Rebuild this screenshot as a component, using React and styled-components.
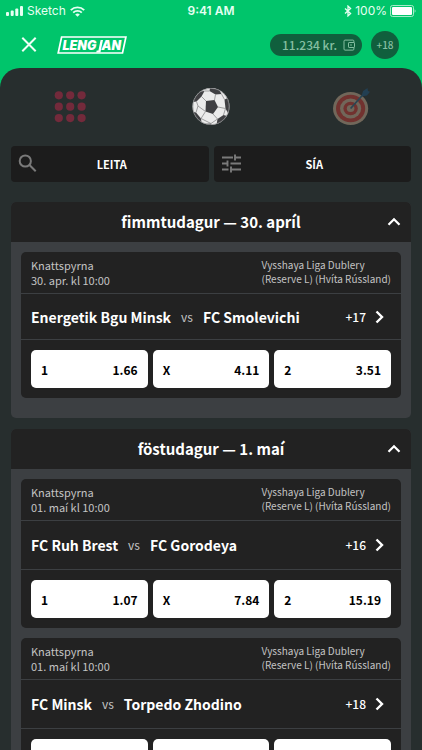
import React from 'react';
import styled, { createGlobalStyle } from 'styled-components';

const GlobalStyle = createGlobalStyle`
  * {
    box-sizing: border-box;
  }

  html {
    background-color: #272e2e;
  }

  body {
    margin: 0;
    background-color: #272e2e;
    overflow-x: hidden;
    scrollbar-width: none;
  }

  body, button {
    font-family: 'Noto Sans CJK JP', 'Noto Sans', sans-serif;
  }

  button {
    margin: 0;
    padding: 0;
    border: 0;
    background: none;
    color: inherit;
    cursor: pointer;
  }

  p, h2 {
    margin: 0;
  }
`;

const Page = styled.div`
  height: 100vh;
  overflow: hidden;
  background-color: #00c56b;
`;

const StatusBar = styled.div`
  display: grid;
  grid-template-columns: 1fr auto 1fr;
  align-items: center;
  height: 22px;
  padding: 0 6px;
  font-family: Inter, sans-serif;
  font-size: 12px;
  line-height: 22px;
  color: #e6fff2;
`;

const StatusGroup = styled.div`
  display: flex;
  align-items: center;
  gap: ${({ $gap }) => $gap}px;
  justify-content: ${({ $end }) => ($end ? 'flex-end' : 'flex-start')};
`;

const Clock = styled.span`
  font-weight: 600;
`;

const TopBar = styled.header`
  display: flex;
  align-items: center;
  height: 46px;
  padding: 0 23px 0 20px;
`;

const CloseButton = styled.button`
  display: flex;
  margin-right: 19px;
`;

const Balance = styled.button`
  display: flex;
  align-items: center;
  gap: 6px;
  height: 22px;
  margin-left: auto;
  padding: 0 7px 0 12px;
  border-radius: 11px;
  background-color: #105f3d;
  color: #86bfa2;
  font-size: 12px;
  font-weight: 500;
  line-height: 22px;
`;

const AgeBadge = styled.span`
  width: 28px;
  height: 28px;
  margin-left: 9px;
  border-radius: 50%;
  background-color: #105f3d;
  color: #86bfa2;
  font-size: 10px;
  font-weight: 500;
  line-height: 28px;
  text-align: center;
`;

const Sheet = styled.main`
  min-height: 100%;
  padding: 0 11px;
  border-radius: 20px 20px 0 0;
  background-color: #272e2e;
`;

const SportTabs = styled.nav`
  display: grid;
  grid-template-columns: repeat(3, 1fr);
  height: 78px;
  margin: 0 -11px;
`;

const SportTab = styled.button`
  display: flex;
  align-items: center;
  justify-content: center;
`;

const Tools = styled.div`
  display: grid;
  grid-template-columns: 1fr 1fr;
  gap: 5px;
  margin-bottom: 20px;
`;

const ToolButton = styled.button`
  display: grid;
  grid-template-columns: 24px 1fr 20px;
  align-items: center;
  height: 36px;
  padding: 0 6px;
  border-radius: 4px;
  background-color: #1c1c1c;
  color: #fff;
  font-size: 11px;
  font-weight: 700;
  line-height: 36px;
`;

const Day = styled.section`
  margin-bottom: 11px;
  border-radius: 5px;
  background-color: #3c3f42;
  overflow: hidden;
`;

const DayHeader = styled.button`
  display: grid;
  grid-template-columns: 24px 1fr 24px;
  align-items: center;
  width: 100%;
  height: 40px;
  padding: 0 5px;
  background-color: #222;
  color: #fff;
`;

const DayTitle = styled.h2`
  font-size: 15px;
  font-weight: 700;
  line-height: 40px;
  text-align: center;
`;

const DayBody = styled.div`
  display: flex;
  flex-direction: column;
  gap: 10px;
  padding: 10px 10px 20px;
`;

const Match = styled.article`
  border-radius: 5px;
  background-color: #222;
`;

const MatchInfo = styled.div`
  display: flex;
  justify-content: space-between;
  height: 42px;
  padding: 6px 10px 0;
  border-bottom: 1px solid #3c3f42;
  color: #c4c4c4;
`;

const Kickoff = styled.p`
  font-size: 11px;
  line-height: 15px;
`;

const League = styled.p`
  font-size: 10px;
  line-height: 14px;
`;

const Teams = styled.button`
  display: flex;
  align-items: center;
  width: 100%;
  height: ${({ $tall }) => ($tall ? 49 : 46)}px;
  padding: 0 11px 0 10px;
  border-bottom: 1px solid #3c3f42;
  color: #fff;
  font-size: 14px;
  font-weight: 700;
  line-height: 20px;
`;

const Versus = styled.span`
  margin: 0 10px;
  color: #c4c4c4;
  font-size: 12px;
  font-weight: 400;
`;

const MoreBets = styled.span`
  display: flex;
  align-items: center;
  gap: 2px;
  margin-left: auto;
  font-size: 12px;
  font-weight: 500;
`;

const Odds = styled.div`
  display: grid;
  grid-template-columns: repeat(3, 1fr);
  gap: 5px;
  padding: 10px;
`;

const Odd = styled.button`
  display: flex;
  align-items: center;
  justify-content: space-between;
  height: 38px;
  padding: 0 10px;
  border-radius: 5px;
  background-color: #fff;
  color: #000;
  font-size: 12px;
  font-weight: 700;
`;

const days = [
  {
    title: 'fimmtudagur — 30. apríl',
    matches: [
      { time: '30. apr. kl 10:00', home: 'Energetik Bgu Minsk', away: 'FC Smolevichi', more: 17, odds: ['1.66', '4.11', '3.51'] },
    ],
  },
  {
    title: 'föstudagur — 1. maí',
    matches: [
      { time: '01. maí kl 10:00', home: 'FC Ruh Brest', away: 'FC Gorodeya', more: 16, tall: true, odds: ['1.07', '7.84', '15.19'] },
      { time: '01. maí kl 10:00', home: 'FC Minsk', away: 'Torpedo Zhodino', more: 18, tall: true, odds: [] },
    ],
  },
];

const SignalIcon = () => (
  <svg width="17" height="10" viewBox="0 0 17 10" fill="currentColor">
    <rect x="0" y="6" width="3" height="4" rx="1" />
    <rect x="4.7" y="4.4" width="3" height="5.6" rx="1" />
    <rect x="9.3" y="2.4" width="3" height="7.6" rx="1" />
    <rect x="14" y="0" width="3" height="10" rx="1" />
  </svg>
);

const WifiIcon = () => (
  <svg width="15" height="11" viewBox="0 0 15 11" fill="none" stroke="currentColor" strokeWidth="1.9">
    <path d="M.8 4.1a9.6 9.6 0 0 1 13.4 0" />
    <path d="M3.2 6.6a6.2 6.2 0 0 1 8.6 0" />
    <path d="M7.5 10.8 5.2 8.5a3.3 3.3 0 0 1 4.6 0z" fill="currentColor" stroke="none" />
  </svg>
);

const BluetoothIcon = () => (
  <svg width="8" height="12" viewBox="0 0 8 12" fill="none" stroke="currentColor" strokeWidth="1.3">
    <path d="M1 3.4 6.6 8.4 4 10.9V1.1l2.6 2.5L1 8.6" />
  </svg>
);

const BatteryIcon = () => (
  <svg width="26" height="12" viewBox="0 0 26 12" fill="none">
    <rect x=".5" y=".5" width="23" height="11" rx="2" stroke="#a5ecc9" />
    <rect x="2" y="2" width="20" height="8" rx="1" fill="#fff" />
    <path d="M24.6 4.2v3.600c1.300-.7 1.300-2.900 0-3.600z" fill="#a5ecc9" />
  </svg>
);

const CloseIcon = () => (
  <svg width="18" height="18" viewBox="0 0 18 18" fill="none" stroke="#f0fff7" strokeWidth="2">
    <path d="M2.3 1.8l13.4 13.4M15.7 1.8 2.3 15.2" />
  </svg>
);

const Logo = () => (
  <svg width="70" height="18" viewBox="0 0 70 18" role="img" aria-label="Lengjan">
    <path d="M4.600 1h64.300l-3.400 16H1.200z" fill="none" stroke="#fff" strokeWidth="1.7" />
    <text x="5.5" y="13.600" fill="#fff" fontFamily="Inter, sans-serif" fontSize="12.500" fontWeight="900" fontStyle="italic">LENG</text>
    <path d="M43.600 4h2.400l-2.600 12.400h-4.200l.5-2h1.700z" fill="#fff" />
    <text x="44.500" y="13.600" fill="#fff" fontFamily="Inter, sans-serif" fontSize="12.500" fontWeight="900" fontStyle="italic">AN</text>
  </svg>
);

const WalletIcon = () => (
  <svg width="12" height="12" viewBox="0 0 12 12" fill="none" stroke="currentColor">
    <path d="M10.9 3.4V2.1a1 1 0 0 0-1-1H2a1 1 0 0 0-1 1v8a1 1 0 0 0 1 1h7.900a1 1 0 0 0 1-1V8.700" />
    <rect x="5.500" y="3.500" width="6" height="5" rx=".6" />
    <circle cx="8" cy="6" r=".8" fill="currentColor" stroke="none" />
  </svg>
);

const GridIcon = () => (
  <svg width="32" height="32" viewBox="0 0 32 32" fill="#732a3b">
    {[4.8, 16.2, 27.6].map((y) => [4.8, 16.2, 27.6].map((x) => <circle key={`${x}-${y}`} cx={x} cy={y - 0.5} r="4.1" />))}
  </svg>
);

const FootballIcon = () => (
  <svg width="38" height="38" viewBox="0 0 38 38">
    <defs>
      <clipPath id="ball">
        <circle cx="19" cy="18.500" r="18.500" />
      </clipPath>
    </defs>
    <circle cx="19" cy="18.500" r="18.500" fill="#ebebeb" />
    <g clipPath="url(#ball)">
      <g fill="#3f3f42">
        <path d="M14 13 22.500 12 26 19 21 26 13.500 23.500z" />
        <path d="M3 9 8 3.500 12.500 3 9.500 8.500 4.500 13.500 1 14z" />
        <path d="M18 0 27 1.500 29.500 6 23.500 6.500 17.500 3z" />
        <path d="M32.500 11.500 36 10 39 19 36 25 33.500 20.500z" />
        <path d="M25.500 31 31.500 27 35 28 30 35 24.500 37z" />
        <path d="M0 23.500 4 24.500 9 30.500 9.500 35 5 32z" />
        <path d="M11 36 19 35.500 20 38 11 38z" />
      </g>
      <path
        d="M14 13 9.500 8.500M22.500 12 23.500 6.500M26 19 33.500 20.500M21 26 25.500 31M13.500 23.500 9 30.500M12.500 3 17.500 3M29.500 6 32.500 11.500M33.500 20.500 31.500 27M25.500 31 19 35.500 9 30.500M4.500 13.500 6 18 4 24.500M6 18 13.500 23.500"
        fill="none"
        stroke="#8a8a8c"
        strokeWidth=".8"
      />
    </g>
    <circle cx="19" cy="18.500" r="18.100" fill="none" stroke="#8f9192" strokeWidth=".7" />
  </svg>
);

const TargetIcon = () => (
  <svg width="38" height="38" viewBox="0 0 38 38">
    <ellipse cx="17.600" cy="20.500" rx="17.600" ry="16.600" fill="#71675a" />
    <ellipse cx="17.600" cy="20.500" rx="14.600" ry="13.800" fill="#71322f" />
    <ellipse cx="17.600" cy="20.500" rx="10.600" ry="10" fill="#71675a" />
    <ellipse cx="17.600" cy="20.500" rx="7.200" ry="6.800" fill="#71322f" />
    <ellipse cx="17.600" cy="20.500" rx="3.800" ry="3.500" fill="#71675a" />
    <path d="M17.600 20.500 31 5.500" stroke="#2c4653" strokeWidth="1.800" />
    <path d="M28.500 8.500 30 3 34.500 0l.5 3 2 .8L34 7.500z" fill="#223f52" />
  </svg>
);

const SearchIcon = () => (
  <svg width="24" height="24" viewBox="0 0 24 24" fill="none" stroke="#7a7a7a" strokeWidth="2">
    <circle cx="8.300" cy="9" r="5.600" />
    <path d="m12.500 13 6.200 6.200" />
  </svg>
);

const TuneIcon = () => (
  <svg width="24" height="24" viewBox="0 0 24 24" fill="none" stroke="#7a7a7a" strokeWidth="1.900">
    <path d="M2 5.500h11M15 5.500h6M15 2.500v6M2 11.500h5.500M10.500 11.500h10.500M7.500 8.500v6M2 17.500h6.500M11 17.500h10M11 14.500v6" />
  </svg>
);

const ChevronUp = () => (
  <svg width="24" height="24" viewBox="0 0 24 24" fill="none" stroke="#fff" strokeWidth="2.300">
    <path d="m6.500 14.700 5.500-5.400 5.500 5.400" />
  </svg>
);

const ChevronRight = () => (
  <svg width="22" height="22" viewBox="0 0 22 22" fill="none" stroke="#fff" strokeWidth="2.400">
    <path d="m8.500 5.500 5.500 5.500-5.500 5.500" />
  </svg>
);

function MatchCard({ match }) {
  return (
    <Match>
      <MatchInfo>
        <Kickoff>
          Knattspyrna
          <br />
          {match.time}
        </Kickoff>
        <League>
          Vysshaya Liga Dublery
          <br />
          (Reserve L) (Hvíta Rússland)
        </League>
      </MatchInfo>
      <Teams $tall={match.tall}>
        <span>{match.home}</span>
        <Versus>vs</Versus>
        <span>{match.away}</span>
        <MoreBets>
          +{match.more}
          <ChevronRight />
        </MoreBets>
      </Teams>
      <Odds>
        {['1', 'X', '2'].map((sign, i) => (
          <Odd key={sign} aria-label={sign}>
            {match.odds[i] && (
              <>
                <span>{sign}</span>
                <span>{match.odds[i]}</span>
              </>
            )}
          </Odd>
        ))}
      </Odds>
    </Match>
  );
}

function App() {
  return (
    <Page>
      <GlobalStyle />
      <StatusBar>
        <StatusGroup $gap={4}>
          <SignalIcon />
          <span>Sketch</span>
          <WifiIcon />
        </StatusGroup>
        <Clock>9:41 AM</Clock>
        <StatusGroup $gap={3} $end>
          <BluetoothIcon />
          <span>100%</span>
          <BatteryIcon />
        </StatusGroup>
      </StatusBar>

      <TopBar>
        <CloseButton aria-label="Loka">
          <CloseIcon />
        </CloseButton>
        <Logo />
        <Balance>
          11.234 kr. <WalletIcon />
        </Balance>
        <AgeBadge>+18</AgeBadge>
      </TopBar>

      <Sheet>
        <SportTabs>
          <SportTab aria-label="Allar íþróttir">
            <GridIcon />
          </SportTab>
          <SportTab aria-label="Knattspyrna">
            <FootballIcon />
          </SportTab>
          <SportTab aria-label="Pílukast">
            <TargetIcon />
          </SportTab>
        </SportTabs>

        <Tools>
          <ToolButton>
            <SearchIcon />
            <span>LEITA</span>
          </ToolButton>
          <ToolButton>
            <TuneIcon />
            <span>SÍA</span>
          </ToolButton>
        </Tools>

        {days.map((day) => (
          <Day key={day.title}>
            <DayHeader>
              <span />
              <DayTitle>{day.title}</DayTitle>
              <ChevronUp />
            </DayHeader>
            <DayBody>
              {day.matches.map((match) => (
                <MatchCard key={match.home} match={match} />
              ))}
            </DayBody>
          </Day>
        ))}
      </Sheet>
    </Page>
  );
}

export default App;
